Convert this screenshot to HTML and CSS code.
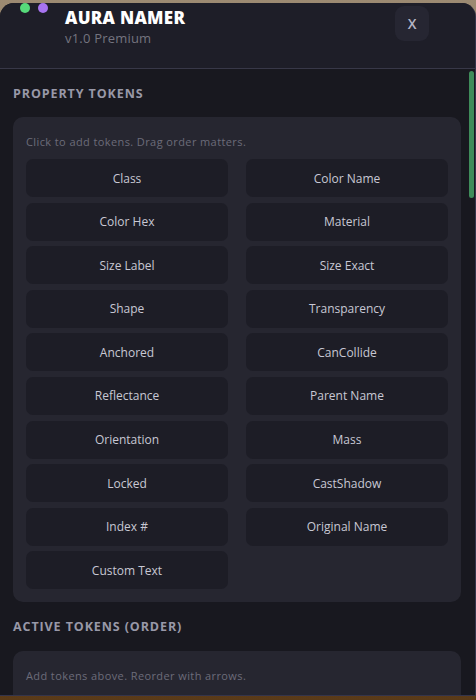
FILE: index.html
```html
<!DOCTYPE html>
<html>
<head>
<meta charset="utf-8">
<link rel="stylesheet" href="styles.css">
</head>
<body>
<div class="window">
  <div class="dots"><span class="dot green"></span><span class="dot purple"></span></div>
  <header class="header">
    <div class="brand">
      <div class="title">AURA NAMER</div>
      <div class="subtitle">v1.0 Premium</div>
    </div>
    <button class="close">X</button>
  </header>
  <main class="content">
    <div class="thumb"></div>
    <h2 class="section-title">PROPERTY TOKENS</h2>
    <section class="panel">
      <p class="hint">Click to add tokens. Drag order matters.</p>
      <div class="grid">
        <button class="token">Class</button>
        <button class="token">Color Name</button>
        <button class="token">Color Hex</button>
        <button class="token">Material</button>
        <button class="token">Size Label</button>
        <button class="token">Size Exact</button>
        <button class="token">Shape</button>
        <button class="token">Transparency</button>
        <button class="token">Anchored</button>
        <button class="token">CanCollide</button>
        <button class="token">Reflectance</button>
        <button class="token">Parent Name</button>
        <button class="token">Orientation</button>
        <button class="token">Mass</button>
        <button class="token">Locked</button>
        <button class="token">CastShadow</button>
        <button class="token">Index #</button>
        <button class="token">Original Name</button>
        <button class="token">Custom Text</button>
      </div>
    </section>
    <h2 class="section-title second">ACTIVE TOKENS (ORDER)</h2>
    <section class="panel active">
      <p class="hint">Add tokens above. Reorder with arrows.</p>
    </section>
  </main>
</div>
</body>
</html>
```
FILE: styles.css
```css
* { box-sizing: border-box; }
html, body { margin: 0; padding: 0; }
body {
  width: 476px;
  height: 700px;
  overflow: hidden;
  background: linear-gradient(180deg, #9c8a72 0%, #7a5a38 60%, #5a3a18 100%);
  font-family: "Open Sans", "Liberation Sans", sans-serif;
  padding-top: 3px;
}
.window {
  position: relative;
  width: 476px;
  height: 693px;
  background: #18181f;
  border-radius: 14px 14px 0 0;
  border-right: 1px solid #34344a;
  border-bottom: 1px solid #34344a;
  overflow: hidden;
  display: flex;
  flex-direction: column;
}
.dots {
  position: absolute;
  top: 0;
  left: 20px;
  display: flex;
  gap: 8px;
}
.dot { width: 10px; height: 10px; border-radius: 50%; display: block; }
.dot.green { background: #56d97a; }
.dot.purple { background: #a774f0; }
.header {
  height: 66px;
  flex: none;
  background: #1e1e28;
  border-bottom: 1px solid #383848;
  display: flex;
  justify-content: space-between;
  align-items: flex-start;
  padding: 4px 46px 0 65px;
}
.title {
  color: #ffffff;
  font-weight: 800;
  font-size: 17px;
  letter-spacing: 0.3px;
  line-height: 22px;
}
.subtitle {
  color: #74747f;
  font-size: 13px;
  line-height: 18px;
  letter-spacing: 0.2px;
  margin-top: 0;
}
.close {
  width: 34px;
  height: 35px;
  margin-top: -1px;
  border: none;
  border-radius: 9px;
  background: #262632;
  color: #b4b4c4;
  font-family: inherit;
  font-size: 14px;
  font-weight: 600;
  padding: 0;
}
.content {
  position: relative;
  flex: 1;
  padding: 0 14px 0 13px;
}
.thumb {
  position: absolute;
  top: 2px;
  right: 1px;
  width: 5px;
  height: 127px;
  border-radius: 3px;
  background: #3f8c5a;
}
.section-title {
  margin: 0;
  padding-top: 17px;
  height: 48px;
  color: #9898a8;
  font-size: 12.5px;
  font-weight: 700;
  letter-spacing: 0.9px;
  line-height: 16px;
}
.section-title.second { padding-top: 17px; height: 49px; }
.panel {
  background: #262630;
  border-radius: 10px;
  padding: 17px 13px 13px;
}
.hint {
  margin: 0 0 9px;
  color: #6c6c7a;
  font-size: 11px;
  letter-spacing: 0.4px;
  line-height: 16px;
}
.grid {
  display: grid;
  grid-template-columns: 1fr 1fr;
  column-gap: 18px;
  row-gap: 5.6px;
}
.token {
  height: 38px;
  border: none;
  border-radius: 7px;
  background: #1d1d26;
  color: #c8c8d4;
  font-family: inherit;
  font-size: 12px;
  padding: 0;
}
.panel.active { padding-top: 17px; min-height: 60px; }
```
